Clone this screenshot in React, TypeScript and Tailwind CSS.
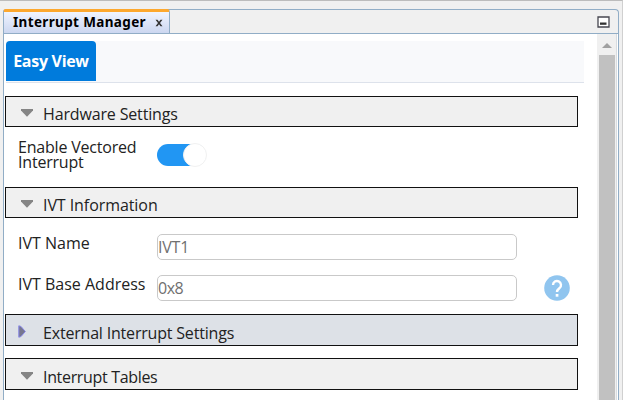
import type { ReactNode } from 'react';

function Section({ title, className, collapsed = false }: { title: ReactNode; className: string; collapsed?: boolean }) {
  return (
    <div className={`-ml-px flex w-[573px] items-center border border-[#111] ${className}`}>
      {collapsed ? (
        <svg className="-mt-[3px] ml-[12px] mr-[17px] shrink-0" width="8" height="13" viewBox="0 0 8 13">
          <path d="M.8.8 3 1.5 7.3 6.5 3 11.5l-2.2.7z" fill="#77778f" stroke="#8585e6" strokeWidth="1" />
        </svg>
      ) : (
        <svg className="-mt-px ml-[15px] mr-[10px] shrink-0" width="12" height="8" viewBox="0 0 12 8">
          <path d="M0 0h12v1.5L6 7.8 0 1.5z" fill="#858585" />
        </svg>
      )}
      {title}
    </div>
  );
}

export default function App() {
  return (
    <div className="flex h-[400px] w-[623px] overflow-hidden border-r border-t border-r-[#d0d0d0] border-t-[#bcbcbc] bg-[#f0f0f0] pl-[3px] pt-2 font-['Open_Sans',sans-serif] text-[16px] text-[#222]">
      <div className="flex h-[392px] w-[616px] flex-col rounded-t-[4px] border border-b-0 border-[#91adc6]">
        <div className="flex h-[24px] shrink-0 border-b border-[#91adc6]">
          <div className="-ml-px -mt-px flex h-[24px] w-[167px] items-center rounded-t-[3px] border-x border-t-[3px] border-x-[#91adc6] border-t-[#fda82e] bg-linear-to-b from-[#f0f4ff] to-[#ccd7f0] pl-[9px] font-['Noto_Sans',sans-serif] text-[13.5px] font-bold text-black">
            <span className="w-[134px] whitespace-nowrap tracking-[0.35px]">Interrupt Manager</span>
            <svg className="ml-[8px]" width="8" height="8" viewBox="0 0 8 8">
              <path d="M.5.8h2L4 2.7 5.5.8h2L5 4l2.5 3.2h-2L4 5.3 2.5 7.2h-2L3 4z" fill="#333" />
            </svg>
          </div>
          <svg className="ml-auto mr-[8px] mt-[6px]" width="13" height="12" viewBox="0 0 13 12">
            <path d="M1 1h11v10H1z" fill="#fff" stroke="#474750" strokeWidth="1.3" />
            <path d="M3 6.5h6.5v2.3H3z" fill="#333" />
          </svg>
        </div>
        <div className="flex min-h-0 flex-1 bg-white">
          <div className="w-[593px] pl-[2px] pt-[7px]">
            <div className="flex h-[42px] w-[578px] border-b border-[#dde2eb] bg-[#f8f9fb]">
              <div className="flex h-[40px] w-[90px] items-center justify-center rounded-t-[4px] bg-[#007bdc] font-bold text-white">
                <span className="whitespace-nowrap tracking-[-0.3px]">Easy View</span>
              </div>
            </div>
            <Section className="mt-[13px] h-[31px] bg-[#f0f0f0] pt-1" title={<span className="tracking-[-0.15px]">Hardware Settings</span>} />
            <div className="flex h-[60px] pl-[12px] pt-[13px]">
              <div className="w-[125px] leading-[15px] tracking-[-0.2px]">Enable Vectored Interrupt</div>
              <div className="ml-[14px] mt-[4px] flex h-[22px] w-[49px] items-center justify-end rounded-full bg-[#2196f3]">
                <div className="-mr-px h-[24px] w-[24px] shrink-0 rounded-full border border-[#f1f1f1] bg-white" />
              </div>
            </div>
            <Section className="h-[31px] bg-[#f0f0f0] pt-1" title={<span className="tracking-[-0.07px]">IVT Information</span>} />
            <div className="flex h-[42px] items-end pl-[12px]">
              <span className="mb-[5px] w-[139px]">IVT Name</span>
              <div className="flex h-[26px] w-[360px] items-center rounded-[5px] border border-[#c9c9c9] tracking-[-0.2px] text-[#707070]">IVT1</div>
            </div>
            <div className="flex h-[41px] items-end pl-[12px]">
              <span className="mb-[5px] w-[139px] whitespace-nowrap">IVT Base Address</span>
              <div className="flex h-[26px] w-[360px] items-center rounded-[5px] border border-[#c9c9c9] tracking-[-0.5px] text-[#707070]">0x8</div>
              <svg className="ml-[27px]" width="26" height="26" viewBox="0 0 26 26">
                <circle cx="13" cy="13" r="12.8" fill="#90c5ef" />
                <path d="M9 10a4 4 0 1 1 6.5 3.1c-1.5 1.2-2.5 1.9-2.5 4" fill="none" stroke="#fff" strokeWidth="2.4" />
                <path d="M11.7 19h2.7v2.7h-2.7z" fill="#fff" />
              </svg>
            </div>
            <Section className="mt-[13px] h-[32px] bg-[#dde1e7] pt-[5px]" collapsed title={<span className="tracking-[-0.19px]">External Interrupt Settings</span>} />
            <Section className="mt-[12px] h-[32px] bg-[#f0f0f0] pt-[5px]" title={<span className="tracking-[-0.33px]">Interrupt Tables</span>} />
          </div>
          <div className="flex w-[20px] flex-col items-center border-r border-[#d8dce0] bg-[#f0f0f0]">
            <svg className="mt-[9px]" width="10" height="5" viewBox="0 0 10 5">
              <path d="M0 5 5 0l5 5z" fill="#a0a0a0" />
            </svg>
            <div className="mt-[7px] w-[16px] flex-1 bg-[#c1c1c1]" />
          </div>
        </div>
      </div>
    </div>
  );
}
